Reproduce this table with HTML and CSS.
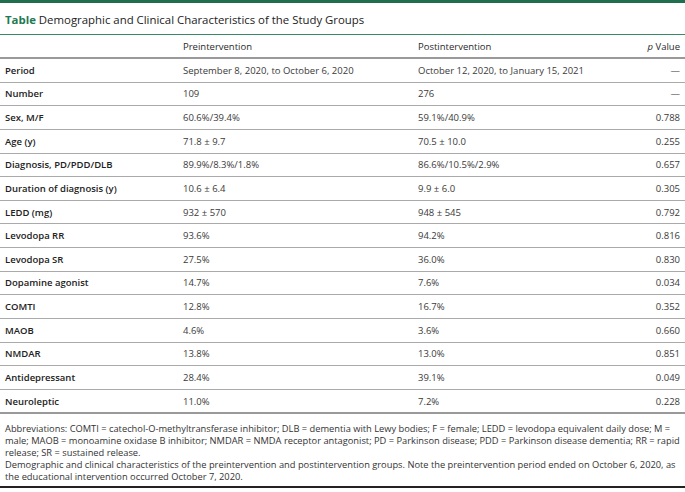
FILE: index.html
```html
<!DOCTYPE html>
<html>
<head>
<meta charset="utf-8">
<link rel="stylesheet" href="styles.css">
</head>
<body>
<div class="topbar"></div>
<div class="caption"><span class="label">Table</span> Demographic and Clinical Characteristics of the Study Groups</div>
<table class="data">
<thead>
<tr><th class="c1"></th><th class="c2">Preintervention</th><th class="c3">Postintervention</th><th class="c4"><i>p</i> Value</th></tr>
</thead>
<tbody>
<tr><td class="c1">Period</td><td>September 8, 2020, to October 6, 2020</td><td>October 12, 2020, to January 15, 2021</td><td class="c4">—</td></tr>
<tr><td class="c1">Number</td><td>109</td><td>276</td><td class="c4">—</td></tr>
<tr><td class="c1">Sex, M/F</td><td>60.6%/39.4%</td><td>59.1%/40.9%</td><td class="c4">0.788</td></tr>
<tr><td class="c1">Age (y)</td><td>71.8 ± 9.7</td><td>70.5 ± 10.0</td><td class="c4">0.255</td></tr>
<tr><td class="c1">Diagnosis, PD/PDD/DLB</td><td>89.9%/8.3%/1.8%</td><td>86.6%/10.5%/2.9%</td><td class="c4">0.657</td></tr>
<tr><td class="c1">Duration of diagnosis (y)</td><td>10.6 ± 6.4</td><td>9.9 ± 6.0</td><td class="c4">0.305</td></tr>
<tr><td class="c1">LEDD (mg)</td><td>932 ± 570</td><td>948 ± 545</td><td class="c4">0.792</td></tr>
<tr><td class="c1">Levodopa RR</td><td>93.6%</td><td>94.2%</td><td class="c4">0.816</td></tr>
<tr><td class="c1">Levodopa SR</td><td>27.5%</td><td>36.0%</td><td class="c4">0.830</td></tr>
<tr><td class="c1">Dopamine agonist</td><td>14.7%</td><td>7.6%</td><td class="c4">0.034</td></tr>
<tr><td class="c1">COMTI</td><td>12.8%</td><td>16.7%</td><td class="c4">0.352</td></tr>
<tr><td class="c1">MAOB</td><td>4.6%</td><td>3.6%</td><td class="c4">0.660</td></tr>
<tr><td class="c1">NMDAR</td><td>13.8%</td><td>13.0%</td><td class="c4">0.851</td></tr>
<tr><td class="c1">Antidepressant</td><td>28.4%</td><td>39.1%</td><td class="c4">0.049</td></tr>
<tr><td class="c1">Neuroleptic</td><td>11.0%</td><td>7.2%</td><td class="c4">0.228</td></tr>
</tbody>
</table>
<div class="notes">
<p>Abbreviations: COMTI = catechol-O-methyltransferase inhibitor; DLB = dementia with Lewy bodies; F = female; LEDD = levodopa equivalent daily dose; M = male; MAOB = monoamine oxidase B inhibitor; NMDAR = NMDA receptor antagonist; PD = Parkinson disease; PDD = Parkinson disease dementia; RR = rapid release; SR = sustained release.</p>
<p>Demographic and clinical characteristics of the preintervention and postintervention groups. Note the preintervention period ended on October 6, 2020, as the educational intervention occurred October 7, 2020.</p>
</div>
<div class="endrule"></div>
</body>
</html>
```
FILE: styles.css
```css
html, body { margin: 0; padding: 0; background: #fff; }
body { font-family: "Open Sans", sans-serif; color: #333; width: 685px; }
.topbar { height: 3px; background: #1f6e4e; }
.caption { font-size: 11.4px; line-height: 16px; padding: 9px 5px 6px; color: #222; border-bottom: 1px solid #3a8a66; }
.caption .label { font-weight: 700; color: #1f7a52; }
.data { width: 100%; border-collapse: collapse; font-size: 9.5px; }
.data th { text-align: left; font-weight: 500; color: #2a2a2a; padding: 0 5px; height: 22px; border-bottom: 2px solid #999; }
.data td { padding: 0 5px; height: 22.64px; border-bottom: 1px solid #aaa; vertical-align: middle; color: #3a3a3a; }
.data tbody tr:last-child td { border-bottom: 2px solid #999; }
.data td.c1 { font-weight: 600; color: #222; }
.c1 { width: 168px; }
.c2 { width: 225px; }
.c4 { text-align: right !important; }
.notes { font-size: 9.3px; line-height: 12px; padding: 9px 4px 3px 5px; color: #333; }
.notes p { margin: 0; }
.endrule { border-top: 2px solid #222; }
```
